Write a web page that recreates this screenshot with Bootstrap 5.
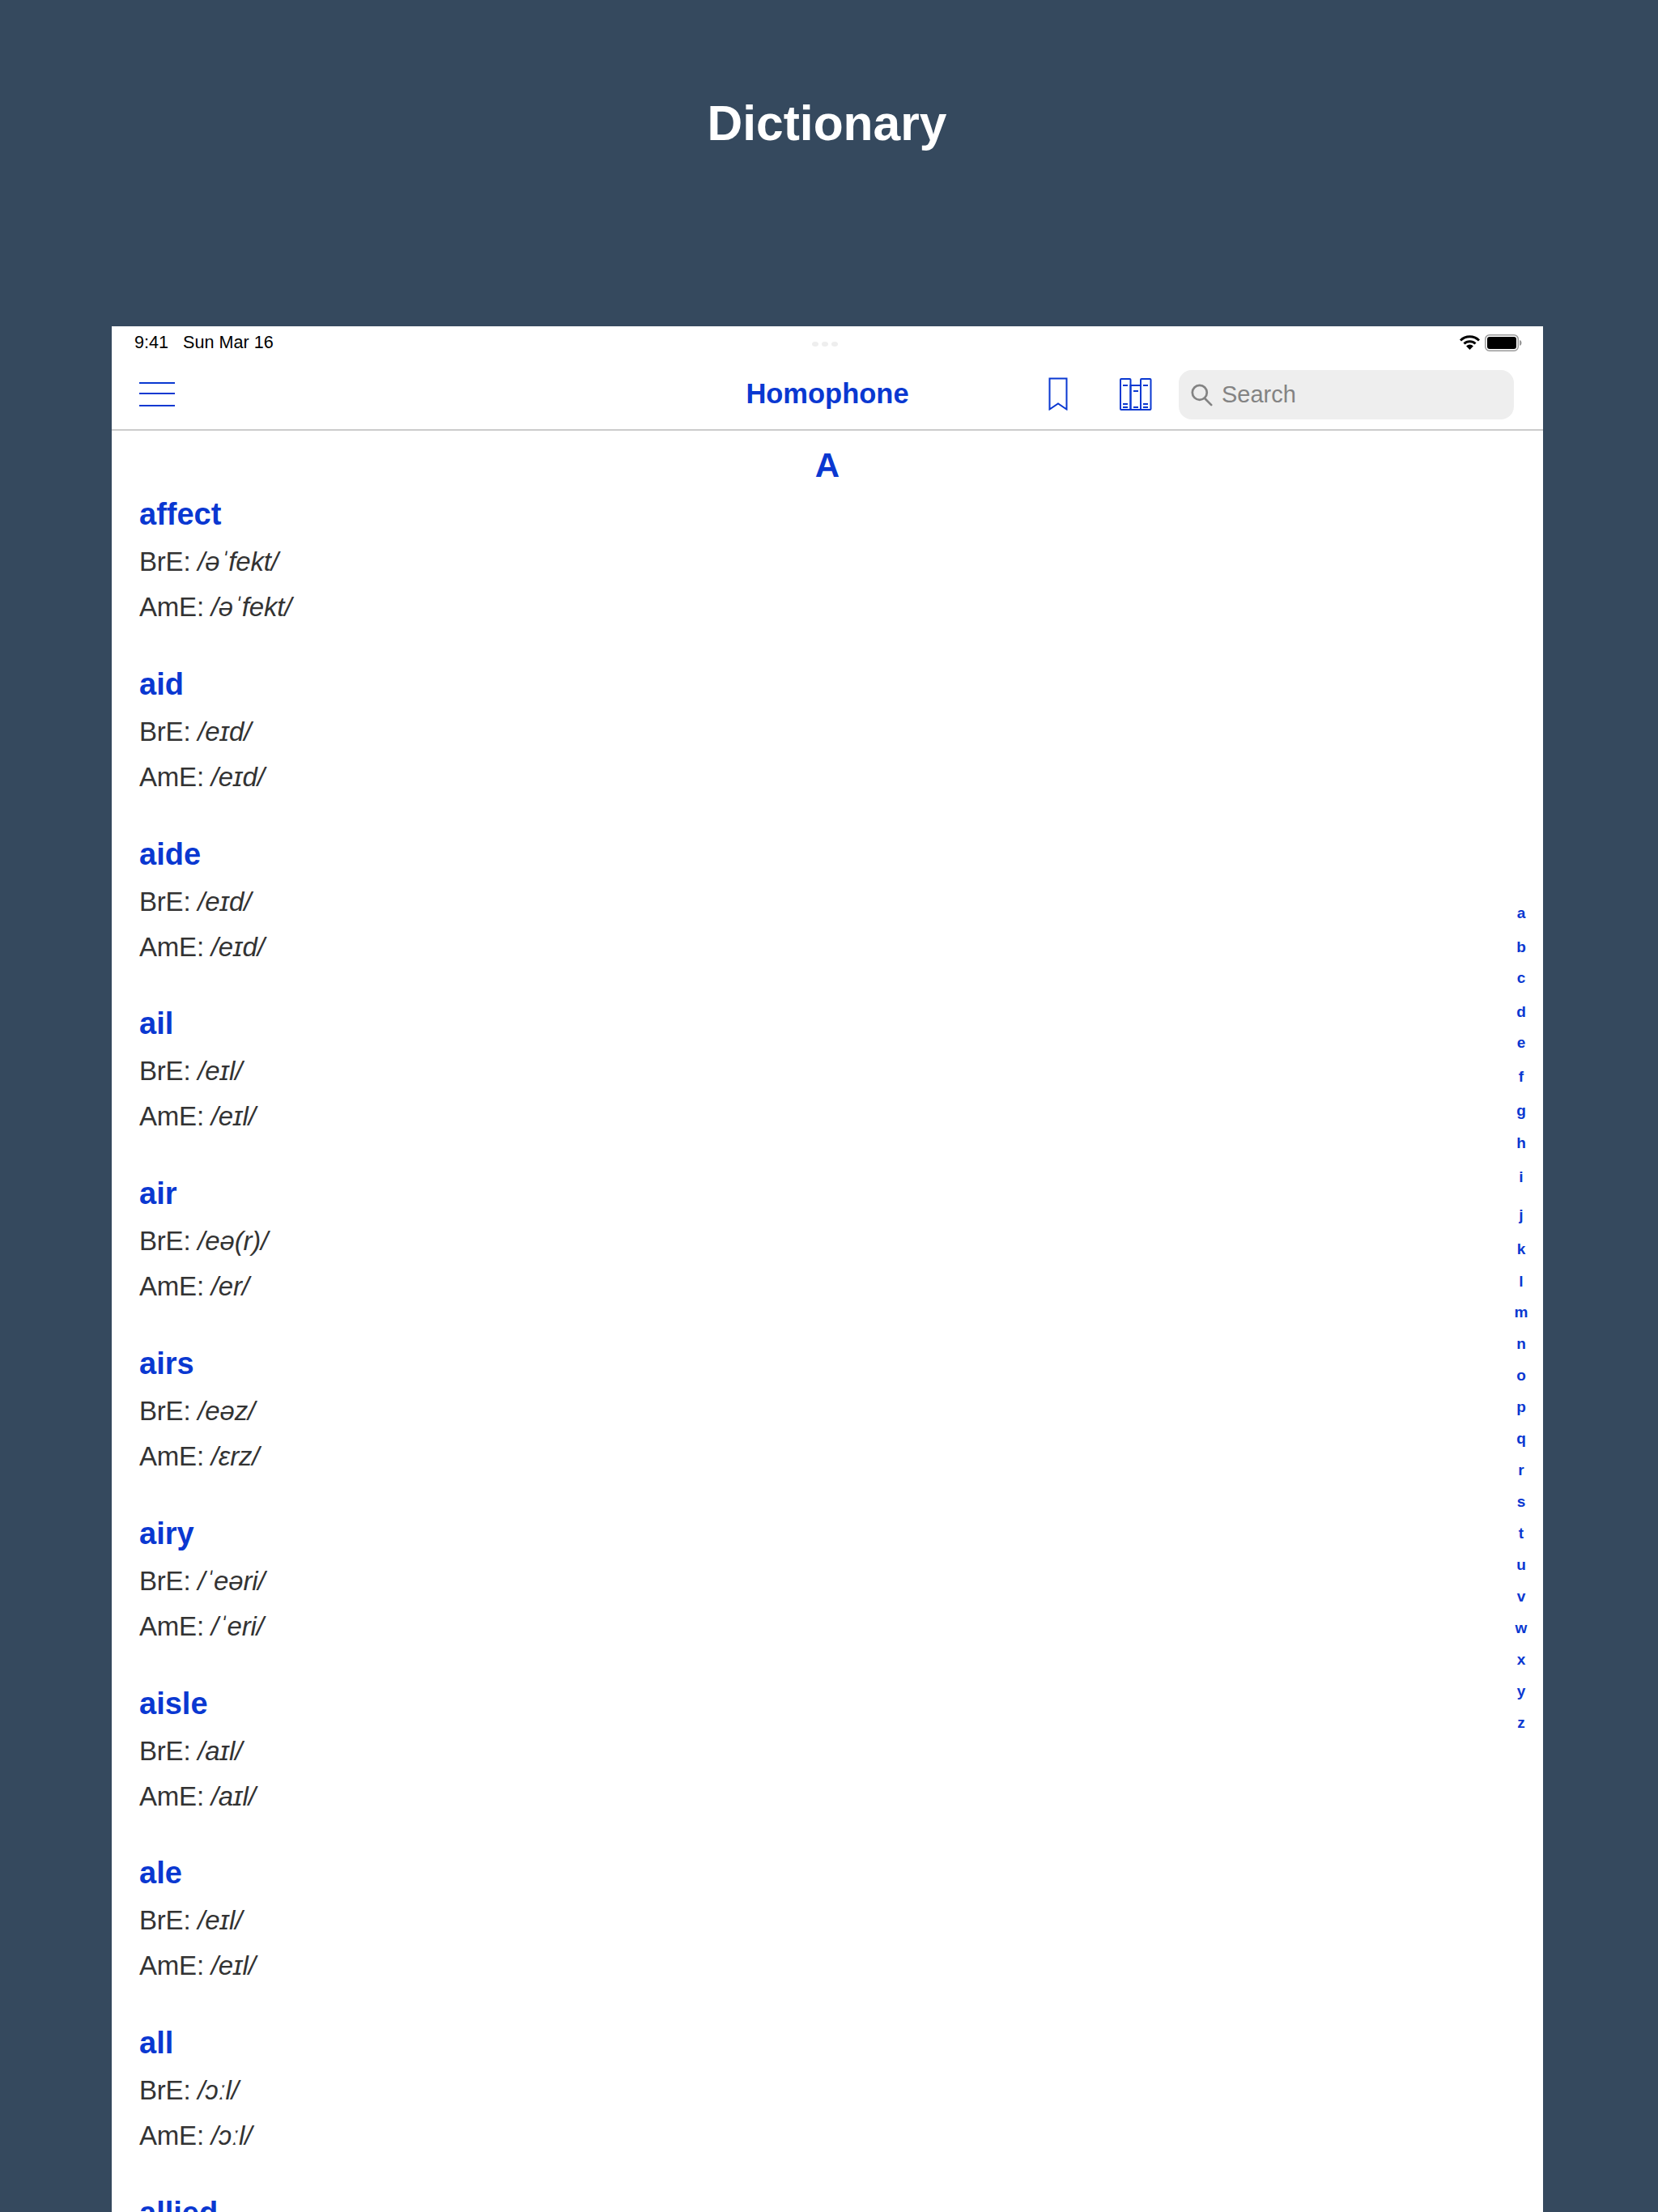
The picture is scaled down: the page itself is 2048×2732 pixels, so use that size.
<!DOCTYPE html>
<html lang="en">
<head>
  <meta charset="UTF-8" />
  <title>Dictionary</title>
  <meta name="viewport" content="width=device-width, initial-scale=1" />
  <link href="https://cdn.jsdelivr.net/npm/bootstrap@5.3.3/dist/css/bootstrap.min.css" rel="stylesheet" />
  <style>
    body { background: #35495e; font-family: "Liberation Sans", Arial, sans-serif; height: 2732px; overflow: hidden; }
    .promo-head { height: 403px; padding: 114px 5px 0 0; }
    .promo-title { font-size: 60.5px; line-height: 76px; font-weight: 700; color: #fff; margin: 0; }
    .device { margin: 0 142px 0 138px; background: #fff; height: 2329px; overflow: hidden; position: relative; }
    .status-row { height: 40px; padding: 0 26px 0 28px; font-size: 21.6px; color: #000; position: relative; }
    .status-dots { position: absolute; left: 865px; top: 19px; gap: 4px; }
    .status-dots i { width: 8px; height: 6px; border-radius: 50%; background: #eee; display: block; }
    .status-icons { gap: 6px; }
    .app-bar { height: 89px; border-bottom: 2px solid #ccc; padding: 0 36px 0 34px; position: relative; }
    .menu-lines { width: 44px; height: 30px; border-top: 2px solid #0a38d1; border-bottom: 2px solid #0a38d1; position: relative; }
    .menu-lines::after { content: ""; position: absolute; left: 0; right: 0; top: 11px; border-top: 2px solid #0a38d1; }
    .bar-title { position: absolute; left: 0; right: 0; text-align: center; font-size: 34.5px; font-weight: 700; color: #0a38d1; }
    .bar-actions { margin-left: auto; position: relative; }
    .mark-icon { margin-right: 64px; }
    .search-field { width: 414px; height: 61px; background: #eee; border-radius: 16px; padding-left: 15px; font-size: 29px; color: #838383; gap: 11px; margin: 2px 0 0 33px; }
    .section-letter { text-align: center; font-size: 42px; font-weight: 700; color: #0a38d1; line-height: 48px; margin-top: 19px; }
    .word-list { padding-left: 34px; margin-top: 7px; }
    .word-entry { height: 209.8px; color: #333; font-size: 33px; letter-spacing: -.2px; line-height: 56px; }
    .word-name { font-size: 38px; font-weight: 700; letter-spacing: 0; color: #0a38d1; line-height: 58px; margin-bottom: 2px; }
    .alpha-index { position: absolute; right: 15px; top: 705px; width: 24px; text-align: center; font-size: 19px; font-weight: 700; color: #0a38d1; }
    .alpha-index div { height: 39px; line-height: 40px; }
    .alpha-index .idx-wide { height: 42px; }
    .alpha-index .idx-mid { height: 40px; }
    .alpha-index .idx-gap { height: 47px; }
    .alpha-index .idx-tight { height: 38px; }
  </style>
</head>
<body>
  <div class="promo-head text-center">
    <h1 class="promo-title">Dictionary</h1>
  </div>

  <div class="device">
    <div class="status-row d-flex align-items-center justify-content-between">
      <span>9:41&nbsp;&nbsp; Sun Mar 16</span>
      <div class="status-dots d-flex"><i></i><i></i><i></i></div>
      <div class="status-icons d-flex align-items-center">
        <svg width="25" height="18" viewBox="0 0 25 18">
          <path d="M1 6.500a16.500 16.500 0 0 1 23 0" fill="none" stroke="#000" stroke-width="3"/>
          <path d="M5.500 10.500a10 10 0 0 1 14 0" fill="none" stroke="#000" stroke-width="3"/>
          <path d="M12.500 18l-4.400-4.600a6.200 6.200 0 0 1 8.800 0z" fill="#000"/>
        </svg>
        <svg width="46" height="21" viewBox="0 0 46 21">
          <rect x=".75" y=".75" width="40.500" height="19.500" rx="5" fill="#fff" stroke="#999" stroke-width="1.500"/>
          <rect x="3" y="3" width="36" height="15" rx="3" fill="#000"/>
          <path d="M43 7c1.500.3 2.500 1.500 2.500 3.500S44.500 13.700 43 14z" fill="#999"/>
        </svg>
      </div>
    </div>

    <div class="app-bar d-flex align-items-center">
      <div class="menu-lines"></div>
      <div class="bar-title">Homophone</div>
      <div class="bar-actions d-flex align-items-center">
        <svg class="mark-icon" width="24" height="41" viewBox="0 0 24 41">
          <path d="M1.500 1.500h21v38L12 32.500 1.500 39.500z" fill="none" stroke="#0a38d1" stroke-width="2"/>
        </svg>
        <svg width="40" height="40" viewBox="0 0 40 40" fill="none" stroke="#0a38d1" stroke-width="2">
          <rect x="1" y="1" width="12.500" height="38" rx="1"/>
          <rect x="13.500" y="9" width="12.500" height="30"/>
          <rect x="26" y="1" width="12.500" height="38" rx="1"/>
          <path d="M4 9h6M4 32h6M4 36h6M17 16h6M17 36h6M29 9h6M29 32h6M29 36h6"/>
        </svg>
        <div class="search-field d-flex align-items-center">
          <svg width="27" height="29" viewBox="0 0 30 32" fill="none" stroke="#838383" stroke-width="3">
            <circle cx="12" cy="13" r="10"/>
            <path d="M19 21l9 9" stroke-linecap="round"/>
          </svg>
          <span>Search</span>
        </div>
      </div>
    </div>

    <div class="section-letter">A</div>

    <div class="word-list">
      <div class="word-entry"><div class="word-name">affect</div><div>BrE: <em>/əˈfekt/</em></div><div>AmE: <em>/əˈfekt/</em></div></div>
      <div class="word-entry"><div class="word-name">aid</div><div>BrE: <em>/eɪd/</em></div><div>AmE: <em>/eɪd/</em></div></div>
      <div class="word-entry"><div class="word-name">aide</div><div>BrE: <em>/eɪd/</em></div><div>AmE: <em>/eɪd/</em></div></div>
      <div class="word-entry"><div class="word-name">ail</div><div>BrE: <em>/eɪl/</em></div><div>AmE: <em>/eɪl/</em></div></div>
      <div class="word-entry"><div class="word-name">air</div><div>BrE: <em>/eə(r)/</em></div><div>AmE: <em>/er/</em></div></div>
      <div class="word-entry"><div class="word-name">airs</div><div>BrE: <em>/eəz/</em></div><div>AmE: <em>/ɛrz/</em></div></div>
      <div class="word-entry"><div class="word-name">airy</div><div>BrE: <em>/ˈeəri/</em></div><div>AmE: <em>/ˈeri/</em></div></div>
      <div class="word-entry"><div class="word-name">aisle</div><div>BrE: <em>/aɪl/</em></div><div>AmE: <em>/aɪl/</em></div></div>
      <div class="word-entry"><div class="word-name">ale</div><div>BrE: <em>/eɪl/</em></div><div>AmE: <em>/eɪl/</em></div></div>
      <div class="word-entry"><div class="word-name">all</div><div>BrE: <em>/ɔːl/</em></div><div>AmE: <em>/ɔːl/</em></div></div>
      <div class="word-entry"><div class="word-name">allied</div></div>
    </div>

    <div class="alpha-index">
      <div class="idx-wide">a</div><div class="idx-tight">b</div><div class="idx-wide">c</div><div class="idx-tight">d</div><div class="idx-wide">e</div><div class="idx-wide">f</div><div class="idx-mid">g</div><div class="idx-wide">h</div><div class="idx-gap">i</div><div class="idx-wide">j</div><div class="idx-mid">k</div><div class="idx-tight">l</div><div>m</div><div>n</div><div>o</div><div>p</div><div>q</div><div>r</div><div>s</div><div>t</div><div>u</div><div>v</div><div>w</div><div>x</div><div>y</div><div>z</div>
    </div>
  </div>

  <script src="https://cdn.jsdelivr.net/npm/bootstrap@5.3.3/dist/js/bootstrap.bundle.min.js"></script>
</body>
</html>
